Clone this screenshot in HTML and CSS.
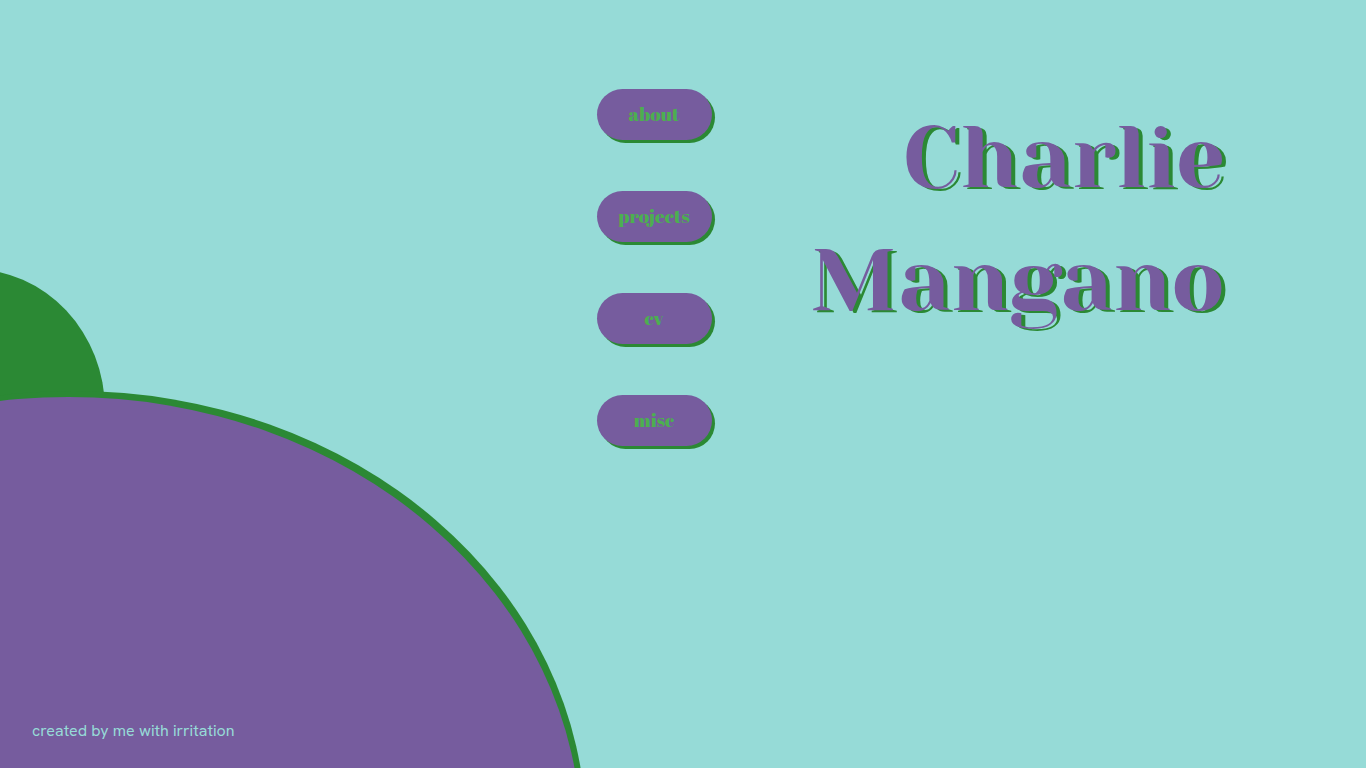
FILE: index.html
```html
<!DOCTYPE html>
<html lang="en">
<head>
<meta charset="utf-8">
<meta name="viewport" content="width=device-width, initial-scale=1">
<title>Charlie Mangano</title>
<link rel="stylesheet" href="styles.css">
</head>
<body class="page">
<div class="scenery" aria-hidden="true">
<div class="bush"></div>
<div class="hill"></div>
</div>
<main class="intro">
<nav class="menu" aria-label="Main">
<a class="menu-link" href="#about">about</a>
<a class="menu-link" href="#projects">projects</a>
<a class="menu-link" href="#cv">cv</a>
<a class="menu-link" href="#misc">misc</a>
</nav>
<h1 class="name">Charlie<br>Mangano</h1>
</main>
<footer class="credit">created by me with irritation</footer>
</body>
</html>
```
FILE: styles.css
```css
* {
  box-sizing: border-box;
}

.page {
  position: relative;
  display: flex;
  flex-direction: column;
  justify-content: space-between;
  min-height: 100vh;
  margin: 0;
  overflow-x: hidden;
  background: #96dbd7;
}

/* Decorative shapes behind the content */
.scenery {
  position: absolute;
  inset: 0;
  z-index: -1;
  overflow: hidden;
}

.bush,
.hill {
  position: absolute;
  border-radius: 50%;
}

.bush {
  top: 269px;
  left: -161px;
  width: 266px;
  height: 282px;
  background: #2b8934;
}

.hill {
  top: 397px;
  left: -444px;
  width: 75vw;
  height: 882px;
  background: #765c9e;
  box-shadow: 5px -6px #2b8934;
}

.intro {
  display: flex;
  justify-content: flex-end;
  gap: 99px;
  padding: 89px 141px 0 32px;
}

.menu {
  display: flex;
  flex-direction: column;
  gap: 51px;
}

.menu-link {
  width: 115px;
  border-radius: 26px;
  background: #765c9e;
  box-shadow: 3px 3px #2b8934;
  color: #4caf50;
  font: 19px/51px "Abril Fatface", "Liberation Serif", serif;
  text-align: center;
  text-decoration: none;
}

.name {
  margin: 7px 0 0;
  color: #765c9e;
  font: 400 88px/123px "Yeseva One", "Liberation Serif", serif;
  text-align: right;
  text-shadow: 4px 2px #2b8934;
}

.credit {
  padding: 0 32px 26px;
  color: #96dbd7;
  font: 400 16px/22px "Hanken Grotesk", "Open Sans", sans-serif;
}
```
